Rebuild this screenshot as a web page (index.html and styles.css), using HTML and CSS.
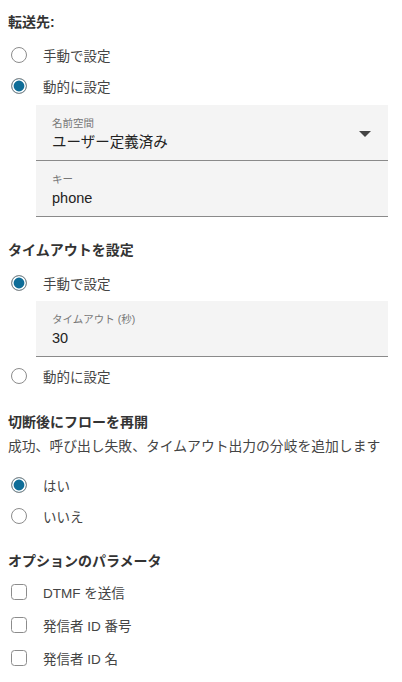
FILE: index.html
```html
<!DOCTYPE html>
<html lang="ja">
<head>
<meta charset="utf-8">
<link rel="stylesheet" href="styles.css">
</head>
<body>
<div class="page">
  <section class="sec sec-first">
    <h2 class="heading">転送先:</h2>
    <div class="opt"><span class="radio"></span><span class="lbl">手動で設定</span></div>
    <div class="opt"><span class="radio on"></span><span class="lbl">動的に設定</span></div>
    <div class="field select">
      <div class="fbody">
        <div class="flabel">名前空間</div>
        <div class="fvalue">ユーザー定義済み</div>
      </div>
      <svg class="caret" width="12" height="6" viewBox="0 0 12 6"><polygon points="0,0 12,0 6,6" fill="#444"/></svg>
    </div>
    <div class="field">
      <div class="fbody">
        <div class="flabel">キー</div>
        <div class="fvalue">phone</div>
      </div>
    </div>
  </section>

  <section class="sec sec-2">
    <h2 class="heading">タイムアウトを設定</h2>
    <div class="opt"><span class="radio on"></span><span class="lbl">手動で設定</span></div>
    <div class="field">
      <div class="fbody">
        <div class="flabel">タイムアウト (秒)</div>
        <div class="fvalue">30</div>
      </div>
    </div>
    <div class="opt"><span class="radio"></span><span class="lbl">動的に設定</span></div>
  </section>

  <section class="sec sec-3">
    <h2 class="heading">切断後にフローを再開</h2>
    <p class="desc">成功、呼び出し失敗、タイムアウト出力の分岐を追加します</p>
    <div class="opts">
      <div class="opt"><span class="radio on"></span><span class="lbl">はい</span></div>
      <div class="opt"><span class="radio"></span><span class="lbl">いいえ</span></div>
    </div>
  </section>

  <section class="sec sec-4">
    <h2 class="heading">オプションのパラメータ</h2>
    <div class="opt chk"><span class="box"></span><span class="lbl">DTMF を送信</span></div>
    <div class="opt chk"><span class="box"></span><span class="lbl">発信者 ID 番号</span></div>
    <div class="opt chk"><span class="box"></span><span class="lbl">発信者 ID 名</span></div>
  </section>
</div>
</body>
</html>
```
FILE: styles.css
```css
html, body {
  margin: 0;
  padding: 0;
  background: #fff;
}
body {
  font-family: "Liberation Sans", "Noto Sans CJK JP", sans-serif;
  color: #333;
  -webkit-font-smoothing: antialiased;
}
.page {
  padding: 12px 8px 0 8px;
}
.sec {
  display: flex;
  flex-direction: column;
}
.sec-2 { margin-top: 23px; }
.sec-3 { margin-top: 21px; }
.sec-4 { margin-top: 20px; }

.heading {
  margin: 0 0 7px 0;
  font-size: 14px;
  line-height: 20px;
  font-weight: bold;
  color: #333;
}
.sec-4 .heading { margin-bottom: 4px; }

.desc {
  margin: -2px 0 12px 0;
  font-size: 13.8px;
  line-height: 20px;
  color: #444;
}

.opt {
  display: flex;
  align-items: center;
  height: 31px;
  padding-left: 3px;
}
.chk { height: 33px; }
.lbl {
  margin-left: 16px;
  font-size: 13.5px;
  color: #444;
}
.radio {
  box-sizing: border-box;
  width: 16px;
  height: 16px;
  border-radius: 50%;
  border: 1px solid #8c8c8c;
  background: #fff;
  flex: none;
}
.radio.on {
  background: #0e6d98;
  box-shadow: inset 0 0 0 1.6px #fff;
}
.box {
  box-sizing: border-box;
  width: 16px;
  height: 16px;
  border-radius: 3.5px;
  border: 1px solid #8c8c8c;
  background: #fff;
  flex: none;
}

.field {
  display: flex;
  align-items: center;
  margin: 4px 6px 0 28px;
  background: #f4f4f4;
  border-bottom: 1px solid #8a8a8a;
  padding: 11px 17px 8px 16px;
}
.field + .field { margin-top: 0; }
.sec-2 .field { margin-top: 3px; margin-bottom: 3px; }
.fbody {
  flex: 1;
  display: flex;
  flex-direction: column;
}
.flabel {
  font-size: 10.5px;
  line-height: 14px;
  color: #777;
}
.fvalue {
  margin-top: 2px;
  font-size: 14.5px;
  line-height: 20px;
  color: #222;
}
.caret {
  flex: none;
  margin-top: -1px;
}
```
